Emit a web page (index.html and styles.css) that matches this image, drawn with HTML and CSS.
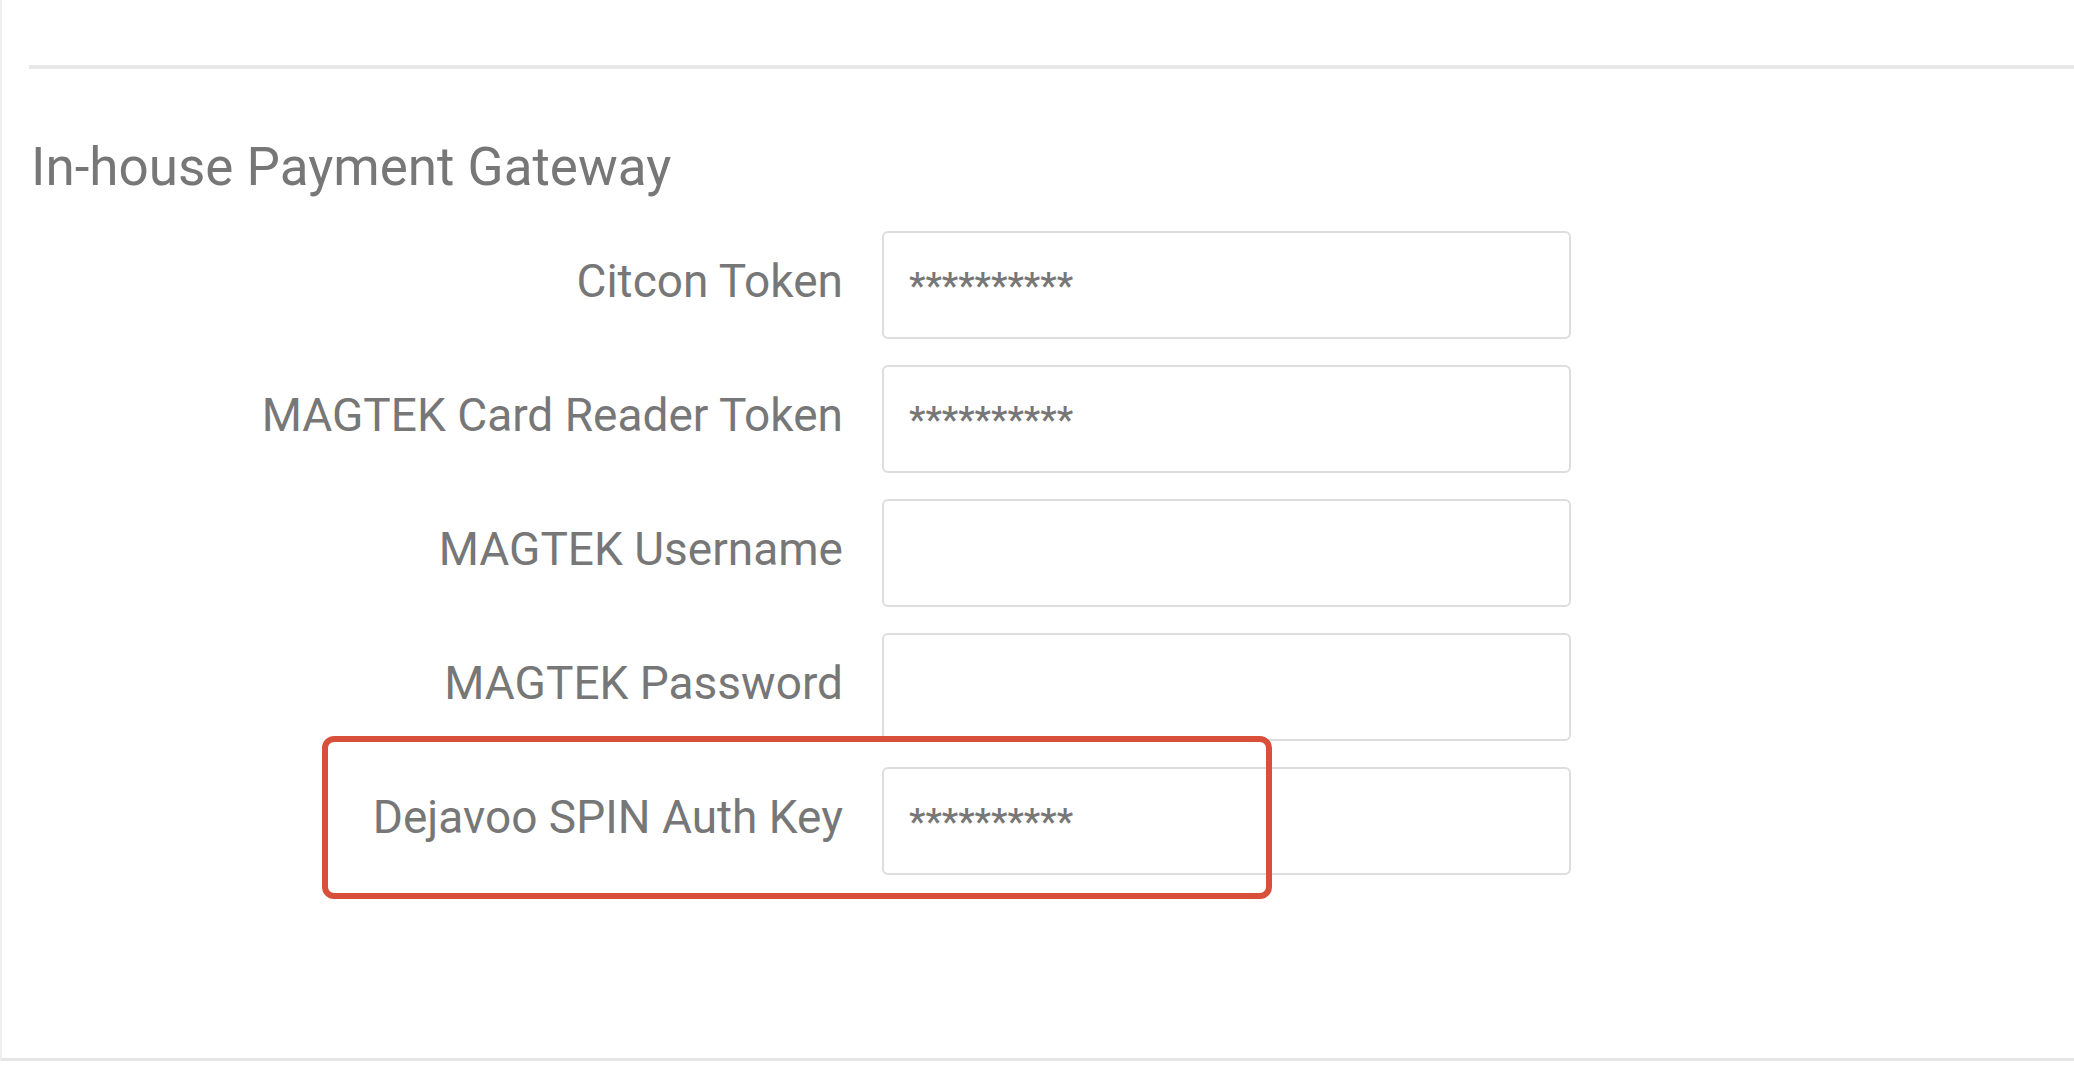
FILE: index.html
```html
<!DOCTYPE html>
<html>
<head>
<meta charset="utf-8">
<link rel="stylesheet" href="styles.css">
</head>
<body>
<div class="panel">
  <div class="divider"></div>
  <h2 class="title">In-house Payment Gateway</h2>
  <div class="form">
    <label class="label">Citcon Token</label>
    <div class="input">**********</div>
    <label class="label">MAGTEK Card Reader Token</label>
    <div class="input">**********</div>
    <label class="label">MAGTEK Username</label>
    <div class="input"></div>
    <label class="label">MAGTEK Password</label>
    <div class="input"></div>
    <label class="label">Dejavoo SPIN Auth Key</label>
    <div class="input">**********</div>
  </div>
  <div class="highlight"></div>
</div>
</body>
</html>
```
FILE: styles.css
```css
html, body {
  margin: 0;
  padding: 0;
  background: #ffffff;
}
body {
  font-family: Roboto, "Liberation Sans", Arial, sans-serif;
  color: #777777;
}
.panel {
  position: relative;
  box-sizing: border-box;
  height: 1061px;
  border-left: 2px solid #efefef;
  border-bottom: 3px solid #e6e6e6;
  padding-left: 27px;
  padding-top: 65px;
}
.divider {
  height: 4px;
  background: #e8e8e8;
}
.title {
  margin: 66px 0 0 2px;
  font-size: 53px;
  line-height: 64px;
  font-weight: 400;
  color: #777777;
}
.form {
  margin-top: 32px;
  display: grid;
  grid-template-columns: 814px 689px;
  column-gap: 39px;
  row-gap: 26px;
}
.label {
  box-sizing: border-box;
  display: flex;
  align-items: center;
  justify-content: flex-end;
  padding-bottom: 8px;
  font-size: 46px;
  color: #777777;
}
.input {
  box-sizing: border-box;
  height: 108px;
  border: 2px solid #dddddd;
  border-radius: 6px;
  padding: 0 25px;
  display: flex;
  align-items: center;
  font-size: 37px;
  font-weight: 500;
  color: #777777;
}
.highlight {
  position: absolute;
  left: 320px;
  top: 736px;
  width: 950px;
  height: 163px;
  box-sizing: border-box;
  border: 6px solid #d8503a;
  border-radius: 12px;
}
```
